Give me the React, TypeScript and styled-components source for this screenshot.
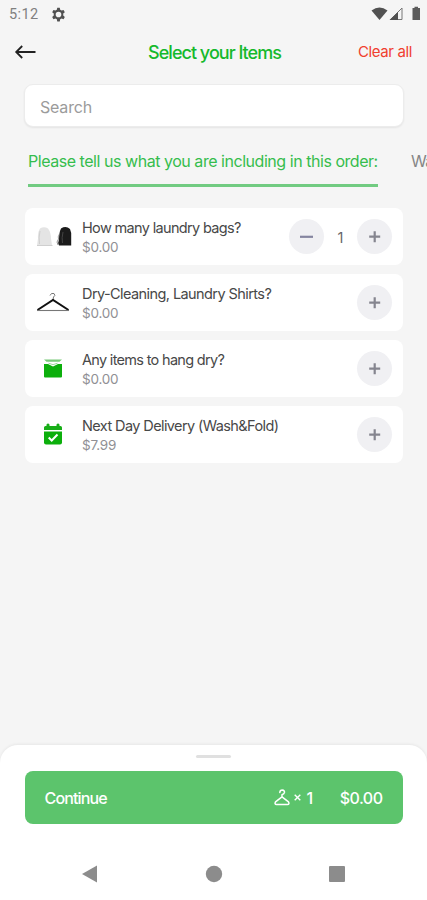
import React from "react";
import styled, { createGlobalStyle } from "styled-components";

const GlobalStyle = createGlobalStyle`
  * { box-sizing: border-box; }
  body { margin: 0; background: #f5f5f5; font-family: Inter, "Liberation Sans", sans-serif; overflow: hidden; }
  button { font: inherit; border: 0; padding: 0; background: none; }
  svg { display: block; }
`;

const Screen = styled.div`
  width: 427px;
  height: 900px;
  display: flex;
  flex-direction: column;
  overflow: hidden;
  background: #f5f5f5;
`;

const StatusBar = styled.div`
  height: 28px;
  flex: none;
  display: flex;
  align-items: center;
  padding: 0 6px 0 9px;
  font: 400 14.5px Roboto, sans-serif;
  color: #808080;
`;

const Clock = styled.span`
  width: 42px;
  letter-spacing: 0.4px;
`;

const StatusIcons = styled.div`
  margin-left: auto;
  display: flex;
  align-items: center;
`;

const Header = styled.header`
  height: 48px;
  flex: none;
  display: grid;
  grid-template-columns: 100px 1fr 100px;
  align-items: center;
  padding: 0 15px 0 14px;
`;

const Title = styled.h1`
  margin: 0 0 0 3px;
  font-size: 18px;
  font-weight: 500;
  letter-spacing: -0.98px;
  text-align: center;
  white-space: nowrap;
  color: #15b92c;
`;

const ClearButton = styled.button`
  justify-self: end;
  margin: -2px 0 0;
  font-size: 15px;
  letter-spacing: -0.38px;
  color: #f0402f;
`;

const SearchField = styled.input`
  flex: none;
  height: 43px;
  margin: 8px 23px 0 24px;
  padding: 2px 15px 0;
  border: 1px solid #ececec;
  border-radius: 9px;
  background: #fff;
  box-shadow: 0 1px 2px rgba(0, 0, 0, 0.07);
  font: 400 16px Inter, sans-serif;
  letter-spacing: -0.2px;
  outline: 0;
  &::placeholder { color: #9b9b9b; opacity: 1; }
`;

const Tabs = styled.nav`
  flex: none;
  display: flex;
  gap: 33px;
  height: 60px;
  padding-left: 28px;
  overflow: hidden;
`;

const Tab = styled.div<{ $active?: boolean }>`
  flex: none;
  width: ${(p) => (p.$active ? "350px" : "auto")};
  height: 60px;
  padding-top: 24px;
  border-bottom: 3px solid ${(p) => (p.$active ? "#71cb81" : "transparent")};
  font-size: 16px;
  line-height: 20px;
  letter-spacing: ${(p) => (p.$active ? "-0.46px" : "-0.8px")};
  white-space: nowrap;
  color: ${(p) => (p.$active ? "#35bd4d" : "#858585")};
`;

const ItemList = styled.main`
  flex: 1;
  display: flex;
  flex-direction: column;
  gap: 9px;
  padding: 21px 24px 0 25px;
`;

const ItemCard = styled.section`
  height: 57px;
  flex: none;
  display: flex;
  align-items: center;
  padding: 0 11px 0 9px;
  border-radius: 8px;
  background: #fff;
`;

const Thumb = styled.div`
  width: 38px;
  height: 38px;
  margin-right: 10px;
  display: grid;
  place-items: center;
`;

const ItemText = styled.div`
  flex: 1;
  min-width: 0;
  padding-top: 1px;
  white-space: nowrap;
`;

const ItemName = styled.div<{ $tracking: number }>`
  font-size: 14.5px;
  line-height: 20px;
  letter-spacing: ${(p) => p.$tracking}px;
  color: #484848;
`;

const ItemPrice = styled.div`
  font-size: 13.5px;
  line-height: 19px;
  letter-spacing: -0.2px;
  color: #909094;
`;

const Stepper = styled.div`
  display: flex;
  align-items: center;
`;

const RoundButton = styled.button`
  width: 35px;
  height: 35px;
  display: grid;
  place-items: center;
  border-radius: 50%;
  background: #f0f0f3;
  color: #85858f;
`;

const Quantity = styled.span`
  width: 33px;
  padding-top: 1px;
  text-align: center;
  font-size: 14.5px;
  color: #66666a;
`;

const Sheet = styled.footer`
  flex: none;
  height: 155px;
  display: flex;
  flex-direction: column;
  align-items: center;
  border-radius: 18px 18px 0 0;
  background: #fff;
  box-shadow: 0 -1px 3px rgba(0, 0, 0, 0.06);
`;

const Handle = styled.div`
  width: 35px;
  height: 3px;
  margin: 10px 0 13px;
  border-radius: 2px;
  background: #e0e0e0;
`;

const ContinueButton = styled.button`
  width: 378px;
  height: 53px;
  display: flex;
  align-items: center;
  padding: 0 20px;
  border-radius: 8px;
  background: #5cc46c;
  color: #fff;
  font-size: 16px;
  font-weight: 500;
  letter-spacing: -0.5px;
`;

const ContinueLabel = styled.span`
  letter-spacing: -0.85px;
`;

const Count = styled.span`
  display: flex;
  align-items: center;
  gap: 4px;
  margin-left: auto;
  margin-right: 27px;
`;

const CountNumber = styled.span`
  margin-left: 2px;
`;

const NavBar = styled.div`
  display: flex;
  align-items: center;
  justify-content: space-between;
  width: 264px;
  height: 20px;
  margin-top: 40px;
`;

const GearIcon = () => (
  <svg width="15" height="15" viewBox="0 0 24 24" fill="#515151">
    <path fillRule="evenodd" d="M10 1h4l.7 3.3 2.2 1.3 3.2-1 2 3.6-2.5 2.2v3.2l2.5 2.2-2 3.6-3.2-1-2.2 1.3L14 23h-4l-.7-3.3-2.2-1.3-3.2 1-2-3.6 2.5-2.2v-3.2L1.900 8.200l2-3.600 3.200 1 2.200-1.300zM12 7.500a4.500 4.500 0 1 0 0 9 4.500 4.500 0 0 0 0-9z" />
  </svg>
);

const StatusGlyphs = () => (
  <svg width="50" height="16" viewBox="0 0 50 16">
    <path d="M.5 4.500Q8.500-1.300 16.500 4.500L8.500 14z" fill="#515151" />
    <path d="M31 2v11.500H19.500z" fill="none" stroke="#777" strokeWidth="1" />
    <path d="M27 6v8h-8.500z" fill="#515151" />
    <path d="M41.500 2h2V.8h3.500V2h2v12h-7.500z" fill="#5c5c5c" />
  </svg>
);

const BackIcon = () => (
  <svg width="24" height="16" viewBox="0 0 24 16" fill="none" stroke="#222" strokeWidth="1.800">
    <path d="M21.500 8H2.500M8.200 2L2.200 8l6 6" />
  </svg>
);

const BagsIcon = () => (
  <svg width="38" height="24" viewBox="0 0 38 24">
    <path d="M6 3.500q4-2.500 8 0 3 4 3 10l1 7H3l1-7q-.5-6 2-10z" fill="#e4e4e4" />
    <path d="M6 6q-1.500 6-.500 13M3 20.500H18.500" fill="none" stroke="#cfcfcf" />
    <path d="M27 3.500q5-3 9 .5 1.500 3 1.200 8v8.500H25q-1.500-3 0-6 0-7 2-11z" fill="#1b1b1b" />
    <path d="M25.500 9q-2 3-1 5l-1.500 3 1 3" fill="none" stroke="#666" strokeWidth=".7" />
    <path d="M29 7q-1.500 6-.5 11" fill="none" stroke="#444" />
  </svg>
);

const HangerIcon = () => (
  <svg width="34" height="24" viewBox="0 0 34 24" fill="none">
    <path d="M14 4.500Q15 1.500 18 2.500q2 2-.5 3.500L17 9" stroke="#777" strokeWidth="1" />
    <path d="M1.500 19L17 9l15.500 10" stroke="#111" strokeWidth="2" />
    <path d="M1 19.500h32" stroke="#777" strokeWidth="1.100" />
  </svg>
);

const HangDryIcon = () => (
  <svg width="20" height="20" viewBox="0 0 20 20">
    <path d="M1 .5h18L16.500 2.800h-13z" fill="#78c978" />
    <path d="M1 5h4L10 7.500 15 5h4v12.500q0 1-1 1H2q-1 0-1-1z" fill="#0caf0c" />
    <path d="M5.500 4.200q4.500 3 9 0" fill="none" stroke="#88cc88" strokeWidth=".8" />
  </svg>
);

const CalendarIcon = () => (
  <svg width="20" height="24" viewBox="0 0 20 24">
    <path d="M1 7V4.500Q1 3 2.500 3h1V1.500Q5-.5 6.500 1.500V3h7V1.500q1.500-2 3 0V3h1Q19 3 19 4.500V7z" fill="#18ae18" />
    <path d="M1 8.500h18v11q0 2-2 2H3q-2 0-2-2z" fill="#0caf0c" />
    <path d="M5.700 14.500l3 3 5.800-6" fill="none" stroke="#fff" strokeWidth="2" />
  </svg>
);

const PlusIcon = () => (
  <svg width="12" height="12" viewBox="0 0 12 12" stroke="currentColor" strokeWidth="2.200">
    <path d="M5.700 .2v11M.2 5.700h11" />
  </svg>
);

const MinusIcon = () => (
  <svg width="13" height="12" viewBox="0 0 13 12" stroke="#8585a0" strokeWidth="2.200">
    <path d="M0 5.800h13" />
  </svg>
);

const SmallHanger = () => (
  <svg width="16" height="17" viewBox="0 0 16 17" fill="none" stroke="#fff" strokeWidth="1.500" strokeLinecap="round" strokeLinejoin="round">
    <path d="M5.800 3.500Q6 1 8.300 1q2.300.2 2.200 2.400Q10.200 5 8 5.800v2l6.500 5q1.300 2.700-1 2.700h-11q-2.300 0-1-2.700L8 7.800" />
  </svg>
);

const TimesIcon = () => (
  <svg width="7" height="7" viewBox="0 0 7 7" stroke="#fff" strokeWidth="1.400">
    <path d="M.7.7l5.600 5.600M6.300.7L.7 6.300" />
  </svg>
);

const items = [
  { name: "How many laundry bags?", price: "$0.00", icon: <BagsIcon />, quantity: 1, tracking: -0.66 },
  { name: "Dry-Cleaning, Laundry Shirts?", price: "$0.00", icon: <HangerIcon />, quantity: 0, tracking: -0.58 },
  { name: "Any items to hang dry?", price: "$0.00", icon: <HangDryIcon />, quantity: 0, tracking: -0.69 },
  { name: "Next Day Delivery (Wash&Fold)", price: "$7.99", icon: <CalendarIcon />, quantity: 0, tracking: -0.6 },
];

export default function App() {
  return (
    <Screen>
      <GlobalStyle />
      <StatusBar>
        <Clock>5:12</Clock>
        <GearIcon />
        <StatusIcons><StatusGlyphs /></StatusIcons>
      </StatusBar>
      <Header>
        <BackIcon />
        <Title>Select your Items</Title>
        <ClearButton>Clear all</ClearButton>
      </Header>
      <SearchField placeholder="Search" />
      <Tabs>
        <Tab $active>Please tell us what you are including in this order:</Tab>
        <Tab>Wash</Tab>
      </Tabs>
      <ItemList>
        {items.map((item) => (
          <ItemCard key={item.name}>
            <Thumb>{item.icon}</Thumb>
            <ItemText>
              <ItemName $tracking={item.tracking}>{item.name}</ItemName>
              <ItemPrice>{item.price}</ItemPrice>
            </ItemText>
            <Stepper>
              {item.quantity > 0 && (
                <>
                  <RoundButton aria-label="Remove one"><MinusIcon /></RoundButton>
                  <Quantity>{item.quantity}</Quantity>
                </>
              )}
              <RoundButton aria-label="Add one"><PlusIcon /></RoundButton>
            </Stepper>
          </ItemCard>
        ))}
      </ItemList>
      <Sheet>
        <Handle />
        <ContinueButton>
          <ContinueLabel>Continue</ContinueLabel>
          <Count><SmallHanger /><TimesIcon /><CountNumber>1</CountNumber></Count>
          <span>$0.00</span>
        </ContinueButton>
        <NavBar>
          <svg width="18" height="18" viewBox="0 0 18 18"><path d="M0 9L15 .5v17z" fill="#8c8c8c" /></svg>
          <svg width="18" height="18" viewBox="0 0 18 18"><circle cx="9" cy="9" r="8.200" fill="#8c8c8c" /></svg>
          <svg width="18" height="18" viewBox="0 0 18 18"><rect x="1" y="1" width="16" height="16" rx="1" fill="#8c8c8c" /></svg>
        </NavBar>
      </Sheet>
    </Screen>
  );
}
